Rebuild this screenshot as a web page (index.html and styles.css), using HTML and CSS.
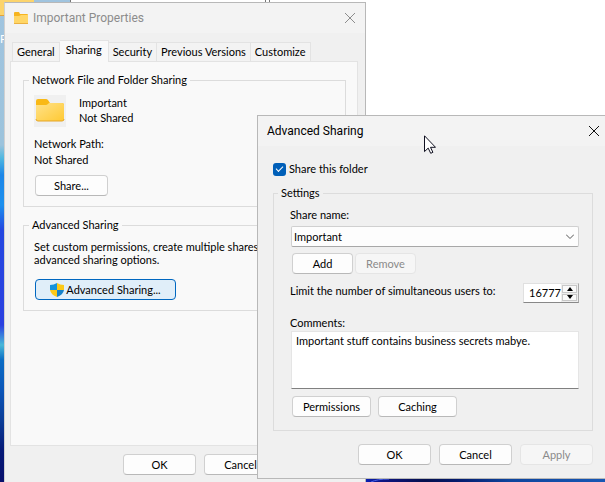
FILE: index.html
```html
<!DOCTYPE html>
<html lang="en">
<head>
<meta charset="utf-8">
<title>Important Properties</title>
<link rel="stylesheet" href="styles.css">
</head>
<body>
<main class="desktop">
  <svg class="wallpaper-edge" viewBox="0 0 240 4" preserveAspectRatio="none" aria-hidden="true">
    <defs><linearGradient id="glow"><stop offset="0" stop-color="#0a1fb4"/><stop offset=".08" stop-color="#0c1480"/><stop offset=".25" stop-color="#05104e"/><stop offset=".38" stop-color="#041a6c"/><stop offset=".6" stop-color="#0d449c"/><stop offset="1" stop-color="#1757b4"/></linearGradient></defs>
    <rect width="240" height="4" fill="url(#glow)"/>
    <path d="M6 4Q12 1 24 1" stroke="#4a63e6" fill="none"/>
  </svg>
  <div class="back-window"></div>
  <span class="desktop-folder"></span>
  <span class="desktop-label">P</span>

  <section class="window properties" aria-label="Important Properties">
    <header class="titlebar">
      <svg class="title-icon" viewBox="0 0 14 12" aria-hidden="true"><path d="M0 1q0-1 1-1h4l1 2h7q1 0 1 1v3H0z" fill="#f6b41f"/><path d="M0 4h5l2-1h7v8H0z" fill="#ffd666"/><path d="M0 11h14v1H0z" fill="#eab042"/></svg>
      <h1>Important Properties</h1>
      <button class="close" aria-label="Close"><svg viewBox="0 0 12 12"><path d="M1 1l10 10M11 1L1 11"/></svg></button>
    </header>
    <div class="properties-body">
      <nav class="tabs" role="tablist">
        <button role="tab">General</button>
        <button role="tab" class="selected" aria-selected="true">Sharing</button>
        <button role="tab">Security</button>
        <button role="tab">Previous Versions</button>
        <button role="tab">Customize</button>
      </nav>
      <div class="panel">
        <fieldset class="network">
          <legend>Network File and Folder Sharing</legend>
          <div class="folder-row">
            <span class="folder-tile"><svg viewBox="0 0 32 32" aria-hidden="true"><defs><linearGradient id="fold" x2="1" y2="1"><stop stop-color="#ffe28a"/><stop offset="1" stop-color="#ffc933"/></linearGradient></defs><path d="M2 6q0-2 2-2h8q1 0 2 1l2 3h12q2 0 2 2v5H2z" fill="#f9b916"/><path d="M2 10h10q1 0 2-1l1-1h13q2 0 2 2v14q0 2-2 2H4q-2 0-2-2z" fill="url(#fold)"/><path d="M2 24q0 2 2 2h24q2 0 2-2" stroke="#e5a526" fill="none"/></svg></span>
            <p>Important<br>Not Shared</p>
          </div>
          <p class="path">Network Path:<br>Not Shared</p>
          <button class="btn">Share...</button>
        </fieldset>
        <fieldset class="advanced">
          <legend>Advanced Sharing</legend>
          <p>Set custom permissions, create multiple shares,<br>advanced sharing options.</p>
          <button class="btn wide default"><svg viewBox="0 0 14 14" aria-hidden="true"><path d="M7 0Q4 2 0 2v5h7z" fill="#1593dc"/><path d="M7 0q3 2 7 2v5H7z" fill="#fbc918"/><path d="M0 7q1 5 7 7V7z" fill="#fbc918"/><path d="M14 7q-1 5-7 7V7z" fill="#1481ca"/></svg>Advanced Sharing...</button>
        </fieldset>
      </div>
      <footer class="actions">
        <button class="btn">OK</button>
        <button class="btn">Cancel</button>
        <button class="btn" disabled>Apply</button>
      </footer>
    </div>
  </section>

  <section class="window dialog" role="dialog" aria-label="Advanced Sharing">
    <header class="titlebar">
      <h2>Advanced Sharing</h2>
      <button class="close" aria-label="Close"><svg viewBox="0 0 12 12"><path d="M1 1l10 10M11 1L1 11"/></svg></button>
    </header>
    <div class="dialog-body">
      <label class="check"><input type="checkbox" checked>Share this folder</label>
      <fieldset class="settings">
        <legend>Settings</legend>
        <label for="share-name">Share name:</label>
        <select id="share-name"><option>Important</option></select>
        <div class="pair">
          <button class="btn small">Add</button>
          <button class="btn small" disabled>Remove</button>
        </div>
        <div class="limit">
          <label for="limit">Limit the number of simultaneous users to:</label>
          <span class="spinner">
            <input id="limit" type="text" value="16777216">
            <span class="steps">
              <button aria-label="Increase"><svg viewBox="0 0 6 4"><path d="M0 4l3-4 3 4z"/></svg></button>
              <button aria-label="Decrease"><svg viewBox="0 0 6 4"><path d="M0 0l3 4 3-4z"/></svg></button>
            </span>
          </span>
        </div>
        <label for="comments">Comments:</label>
        <textarea id="comments" spellcheck="false">Important stuff contains business secrets mabye.</textarea>
        <div class="pair lower">
          <button class="btn large">Permissions</button>
          <button class="btn large">Caching</button>
        </div>
      </fieldset>
      <footer class="actions">
        <button class="btn">OK</button>
        <button class="btn">Cancel</button>
        <button class="btn" disabled>Apply</button>
      </footer>
    </div>
  </section>

  <svg class="cursor" viewBox="0 0 12 19" aria-hidden="true"><path d="M.5.8v15.8l3.7-3.5 2.5 5.2 2.2-1-2.4-5h5z" fill="#fff" stroke="#101020"/></svg>
</main>
</body>
</html>
```
FILE: styles.css
```css
* { box-sizing: border-box; }
body, h1, h2, p, fieldset { margin: 0; }
body, button, input, select, textarea {
  font: 11px/16px Lato, Roboto, sans-serif;
  color: #000;
}
button { padding: 0; white-space: nowrap; }
svg { display: block; }

.desktop {
  position: relative;
  height: 100vh;
  overflow: hidden;
  background: linear-gradient(#a0c4df 0, #9cc3dc 145px, #50b8e0 158px, #1c86e8 175px, #1c90ee 205px, #2447e0 230px, #2a40e0 325px, #48b8d8 345px, #0a6cc4 360px, #0a55b8 390px, #0a3d98 420px, #061a78 450px, #08106c 100%);
}
.wallpaper-edge { position: absolute; left: 365px; right: 0; bottom: 0; width: calc(100% - 365px); height: 4px; }
.back-window {
  position: absolute;
  inset: 0 0 4px 70px;
  border-left: 1px solid #777;
  background: linear-gradient(#777, #777) 194px 0 / 1px 3px no-repeat, linear-gradient(#777, #777) 198px 0 / 1px 3px no-repeat, #fff;
}
.desktop-folder { position: absolute; left: 0; top: 0; width: 34px; height: 16px; background: #fcd46c; border-bottom: 1px solid #e3a33c; }
.desktop-label { position: absolute; left: 0; top: 31px; color: #fff; }

.window { position: absolute; border: 1px solid #b8b8b8; background: #f0f0f0; }
.properties { left: 4px; top: 2px; width: 362px; border-left-color: #d0d0d0; }
.dialog { left: 257px; top: 115px; width: 353px; }

.titlebar { display: flex; align-items: center; height: 30px; padding: 0 9px; background: #f3f3f3; }
.titlebar h1, .titlebar h2 { flex: 1; font: 12px/16px Roboto, sans-serif; }
.titlebar h1 { color: #8c8c8c; }
.title-icon { width: 14px; height: 12px; margin-right: 5px; }
.close { border: 0; background: none; }
.close svg { width: 12px; height: 12px; fill: none; stroke: #111; }
.properties .close svg { stroke: #8c8c8c; }

.properties-body { padding: 7px 7px 8px 5px; }
.tabs { display: flex; align-items: flex-end; height: 21px; padding-left: 2px; }
.tabs button {
  height: 19px;
  padding: 0 4px;
  border: 1px solid #e3e3e3;
  border-width: 1px 1px 0 0;
  background: #f3f3f3;
}
.tabs button:first-child { border-left-width: 1px; }
.tabs .selected { height: 22px; margin-bottom: -1px; padding: 0 6px 3px; background: #f9f9f9; }
.panel { height: 385px; padding: 10px 11px 0 12px; border: 1px solid #e3e3e3; background: #f9f9f9; }

fieldset { min-width: 0; border: 1px solid #dcdcdc; }
legend { padding: 0 3px; }
.network { height: 135px; padding: 7px 10px 0; }
.network legend, .advanced legend { margin-left: -5px; }
.folder-row { display: flex; gap: 13px; line-height: 15px; }
.folder-tile { width: 32px; height: 32px; background: #f0f0f0; }
.path { margin: 9px 0 7px; }
.network .btn, .advanced .btn { margin-left: 1px; }
.advanced { height: 94px; margin-top: 10px; padding: 7px 10px 0; }
.advanced p { line-height: 13px; margin-bottom: 13px; }

.btn {
  width: 73px;
  height: 21px;
  border: 1px solid #d0d0d0;
  border-bottom-color: #b8b8b8;
  border-radius: 4px;
  background: #fdfdfd;
}
.btn:disabled { color: #8a8a8a; border-color: #e5e5e5; background: #f6f6f6; }
.wide { display: flex; align-items: center; justify-content: center; gap: 2px; width: 141px; }
.wide svg { width: 14px; height: 14px; }
.default { border-color: #0067c0; background: #e0eef9; }
.small { width: 61px; }
.large { width: 79px; }
.actions { display: flex; justify-content: flex-end; gap: 8px; padding-top: 8px; }

.dialog-body { padding: 15px 16px 13px 15px; }
.check { display: flex; align-items: center; gap: 3px; }
.check input {
  appearance: none;
  width: 13px;
  height: 13px;
  margin: 0;
  border-radius: 3px;
  background: #005fb8;
  display: grid;
  place-items: center;
}
.check input:checked::before {
  content: "";
  width: 6px;
  height: 3px;
  margin-top: -2px;
  border: solid #fff;
  border-width: 0 0 1px 1px;
  transform: rotate(-45deg);
}
.settings { height: 246px; margin-top: 8px; padding: 6px 13px 0 16px; }
.settings legend { margin-left: -12px; }
.settings > label { display: block; }
.settings select {
  appearance: none;
  display: block;
  width: calc(100% - 1px);
  height: 21px;
  margin: 3px 0 6px 1px;
  padding: 0 2px;
  border: 1px solid #d0d0d0;
  border-bottom-color: #a8a8a8;
  border-radius: 2px;
  background: url("data:image/svg+xml,%3Csvg xmlns='http://www.w3.org/2000/svg' width='8' height='5'%3E%3Cpath d='M0 .5l4 4 4-4' fill='none' stroke='%23555'/%3E%3C/svg%3E") right 4px center no-repeat #fdfdfd;
}
.pair { display: flex; gap: 2px; padding-left: 2px; }
.limit { display: flex; justify-content: space-between; margin: 9px 0 12px; }
.spinner { display: flex; width: 56px; height: 20px; border: 1px solid #e0e0e0; border-bottom-color: #888; border-right-color: #aaa; background: #fff; }
.spinner input { flex: 1; min-width: 0; padding: 0 0 0 5px; border: 0; background: none; }
.steps { display: flex; flex-direction: column; width: 17px; padding: 1px; gap: 1px; background: #eee; }
.steps button { flex: 1; display: grid; place-items: center; border: 1px solid #c8c8c8; background: #fafafa; }
.steps svg { width: 6px; height: 4px; }
.settings textarea {
  display: block;
  width: calc(100% - 1px);
  height: 58px;
  margin-left: 1px;
  padding: 1px 4px;
  border: 1px solid #e5e5e5;
  border-bottom-color: #808080;
  background: #fff;
  resize: none;
  overflow: hidden;
}
.lower { gap: 7px; margin-top: 7px; }
.dialog .actions { padding-top: 13px; }

.cursor { position: absolute; left: 424px; top: 135px; width: 12px; height: 19px; }
```
